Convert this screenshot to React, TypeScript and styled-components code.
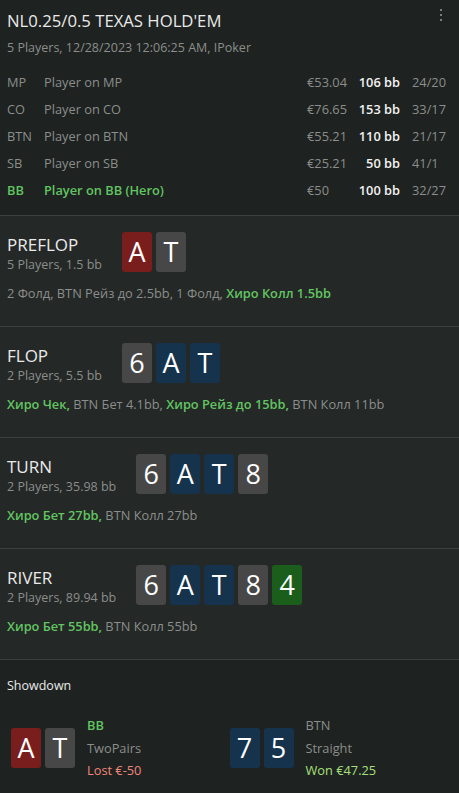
import React from "react";
import styled, { createGlobalStyle } from "styled-components";

const Global = createGlobalStyle`
  html, body { margin: 0; padding: 0; background: #1e2220; }
  body { font-family: "Open Sans", "Noto Sans", sans-serif; color: #e6e6e6; }
  * { box-sizing: border-box; }
`;

const Page = styled.div`
  width: 459px;
  min-height: 793px;
  background: #1e2220;
  display: flex;
  flex-direction: column;
`;

const Header = styled.header`
  position: relative;
  padding: 9px 7px 12px 7px;
  background: #1e2220;
  border-bottom: 1px solid #3b403d;
`;

const Title = styled.h1`
  margin: 0;
  font-size: 16.7px;
  font-weight: 400;
  line-height: 24px;
  color: #eaeaea;
`;

const SubTitle = styled.div`
  font-size: 12.5px;
  line-height: 18px;
  color: #8b8e8c;
  margin-top: 6px;
`;

const Kebab = styled.button`
  position: absolute;
  top: 7px;
  right: 12px;
  width: 12px;
  height: 16px;
  padding: 0;
  border: 0;
  background: transparent;
  display: flex;
  flex-direction: column;
  align-items: center;
  justify-content: center;
  gap: 3px;
  span {
    width: 2px;
    height: 2px;
    background: #9a9d9b;
    border-radius: 1px;
  }
`;

const PlayerList = styled.div`
  margin-top: 11px;
  display: flex;
  flex-direction: column;
`;

const PlayerRow = styled.div<{ $hero?: boolean }>`
  display: grid;
  grid-template-columns: 37px 1fr 51px 42px 52px;
  height: 27px;
  align-items: center;
  font-size: 12.8px;
  color: ${(p) => (p.$hero ? "#62c462" : "#8b8e8c")};
  font-weight: ${(p) => (p.$hero ? 600 : 400)};
`;

const Stack = styled.span`
  color: #8b8e8c;
  font-weight: 400;
`;

const Bb = styled.span`
  text-align: right;
  color: #f2f2f2;
  font-weight: 600;
`;

const Stats = styled.span`
  padding-left: 12px;
  color: #8b8e8c;
  font-weight: 400;
`;

const Street = styled.section`
  background: #242826;
  padding: 16px 7px 0 7px;
  height: 111px;
  border-bottom: 1px solid #3b403d;
  &:last-of-type { border-bottom: 0; }
`;

const StreetTop = styled.div`
  display: flex;
  align-items: flex-start;
  gap: 20px;
`;

const StreetInfo = styled.div`
  display: flex;
  flex-direction: column;
  padding-top: 2px;
`;

const StreetName = styled.div`
  font-size: 17px;
  line-height: 22px;
  color: #eaeaea;
`;

const StreetMeta = styled.div`
  font-size: 12.5px;
  line-height: 18px;
  color: #8b8e8c;
`;

const Cards = styled.div`
  display: flex;
  gap: 4px;
`;

const cardColors: Record<string, string> = {
  r: "#7a1d1d",
  g: "#474747",
  b: "#15334d",
  n: "#1b5e1b",
};

const Card = styled.div<{ $c: string }>`
  width: 30px;
  height: 40px;
  border-radius: 3px;
  background: ${(p) => cardColors[p.$c]};
  color: #ffffff;
  font-size: 27px;
  line-height: 40px;
  text-align: center;
`;

const Actions = styled.div`
  margin-top: 10px;
  font-size: 12.8px;
  line-height: 18px;
  color: #8b8e8c;
`;

const Hero = styled.span`
  color: #62c462;
  font-weight: 600;
`;

const Showdown = styled.section`
  background: #1e2220;
  padding: 17px 11px 0 11px;
  flex: 1;
`;

const ShowdownTitle = styled.div`
  font-size: 12.5px;
  line-height: 18px;
  color: #eaeaea;
  margin-left: -4px;
`;

const ShowdownGrid = styled.div`
  margin-top: 19px;
  display: grid;
  grid-template-columns: 1fr 1fr;
`;

const Hand = styled.div`
  display: flex;
  align-items: center;
  gap: 12px;
`;

const HandInfo = styled.div`
  display: flex;
  flex-direction: column;
  font-size: 12.8px;
  line-height: 22.5px;
  color: #8b8e8c;
`;

const Pos = styled.span<{ $hero?: boolean }>`
  color: ${(p) => (p.$hero ? "#62c462" : "#8b8e8c")};
  font-weight: ${(p) => (p.$hero ? 600 : 400)};
`;

const Result = styled.span<{ $won?: boolean }>`
  color: ${(p) => (p.$won ? "#a6e07a" : "#f0867a")};
`;

const players = [
  { pos: "MP", name: "Player on MP", stack: "€53.04", bb: "106 bb", stats: "24/20" },
  { pos: "CO", name: "Player on CO", stack: "€76.65", bb: "153 bb", stats: "33/17" },
  { pos: "BTN", name: "Player on BTN", stack: "€55.21", bb: "110 bb", stats: "21/17" },
  { pos: "SB", name: "Player on SB", stack: "€25.21", bb: "50 bb", stats: "41/1" },
  { pos: "BB", name: "Player on BB (Hero)", stack: "€50", bb: "100 bb", stats: "32/27", hero: true },
];

type Part = { t: string; hero?: boolean };

const streets: { name: string; meta: string; cards: [string, string][]; actions: Part[] }[] = [
  {
    name: "PREFLOP",
    meta: "5 Players, 1.5 bb",
    cards: [["A", "r"], ["T", "g"]],
    actions: [{ t: "2 Фолд, BTN Рейз до 2.5bb, 1 Фолд, " }, { t: "Хиро Колл 1.5bb", hero: true }],
  },
  {
    name: "FLOP",
    meta: "2 Players, 5.5 bb",
    cards: [["6", "g"], ["A", "b"], ["T", "b"]],
    actions: [
      { t: "Хиро Чек,", hero: true },
      { t: " BTN Бет 4.1bb, " },
      { t: "Хиро Рейз до 15bb,", hero: true },
      { t: " BTN Колл 11bb" },
    ],
  },
  {
    name: "TURN",
    meta: "2 Players, 35.98 bb",
    cards: [["6", "g"], ["A", "b"], ["T", "b"], ["8", "g"]],
    actions: [{ t: "Хиро Бет 27bb,", hero: true }, { t: " BTN Колл 27bb" }],
  },
  {
    name: "RIVER",
    meta: "2 Players, 89.94 bb",
    cards: [["6", "g"], ["A", "b"], ["T", "b"], ["8", "g"], ["4", "n"]],
    actions: [{ t: "Хиро Бет 55bb,", hero: true }, { t: " BTN Колл 55bb" }],
  },
];

export default function App() {
  return (
    <Page>
      <Global />
      <Header>
        <Title>NL0.25/0.5 TEXAS HOLD'EM</Title>
        <SubTitle>5 Players, 12/28/2023 12:06:25 AM, IPoker</SubTitle>
        <Kebab aria-label="menu">
          <span />
          <span />
          <span />
        </Kebab>
        <PlayerList>
          {players.map((p) => (
            <PlayerRow key={p.pos} $hero={p.hero}>
              <span>{p.pos}</span>
              <span>{p.name}</span>
              <Stack>{p.stack}</Stack>
              <Bb>{p.bb}</Bb>
              <Stats>{p.stats}</Stats>
            </PlayerRow>
          ))}
        </PlayerList>
      </Header>
      {streets.map((s) => (
        <Street key={s.name}>
          <StreetTop>
            <StreetInfo>
              <StreetName>{s.name}</StreetName>
              <StreetMeta>{s.meta}</StreetMeta>
            </StreetInfo>
            <Cards>
              {s.cards.map(([v, c], i) => (
                <Card key={i} $c={c}>
                  {v}
                </Card>
              ))}
            </Cards>
          </StreetTop>
          <Actions>
            {s.actions.map((a, i) => (a.hero ? <Hero key={i}>{a.t}</Hero> : <span key={i}>{a.t}</span>))}
          </Actions>
        </Street>
      ))}
      <Showdown>
        <ShowdownTitle>Showdown</ShowdownTitle>
        <ShowdownGrid>
          <Hand>
            <Cards>
              <Card $c="r">A</Card>
              <Card $c="g">T</Card>
            </Cards>
            <HandInfo>
              <Pos $hero>BB</Pos>
              <span>TwoPairs</span>
              <Result>Lost €-50</Result>
            </HandInfo>
          </Hand>
          <Hand>
            <Cards>
              <Card $c="b">7</Card>
              <Card $c="b">5</Card>
            </Cards>
            <HandInfo>
              <Pos>BTN</Pos>
              <span>Straight</span>
              <Result $won>Won €47.25</Result>
            </HandInfo>
          </Hand>
        </ShowdownGrid>
      </Showdown>
    </Page>
  );
}
